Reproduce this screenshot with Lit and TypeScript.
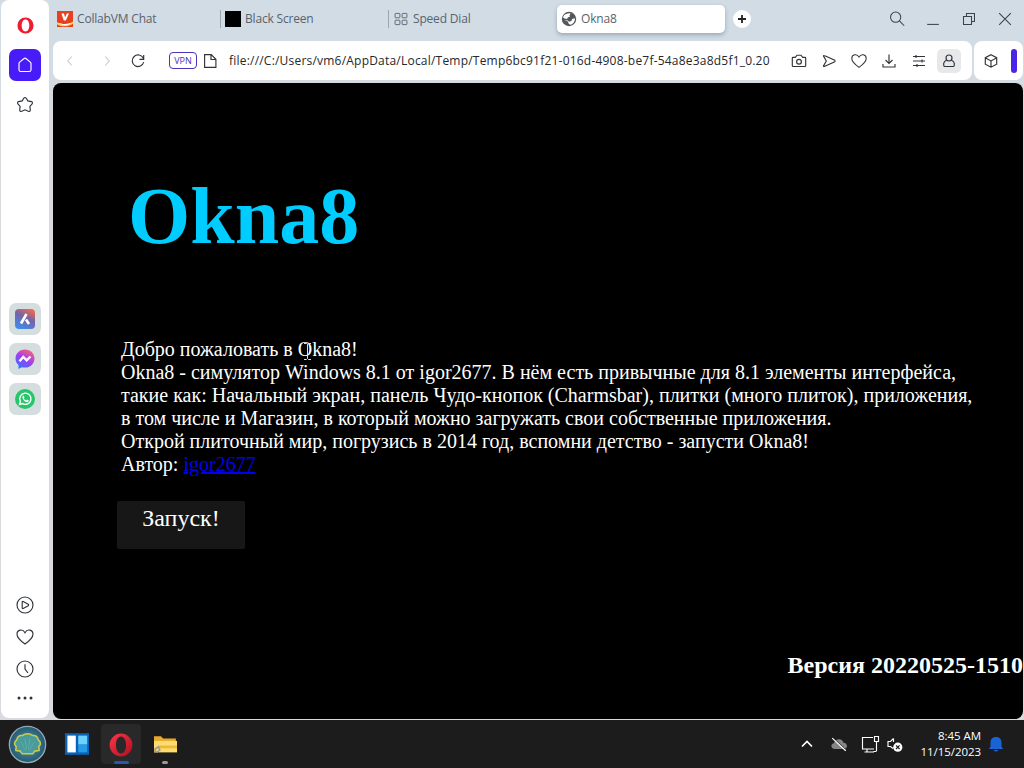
import { LitElement, html, css, svg } from 'lit';
import { customElement, property } from 'lit/decorators.js';
import { classMap } from 'lit/directives/class-map.js';

// line icons, all on a 20x20 grid
const icons: Record<string, unknown> = {
  home: svg`<path d="M4 8.500q0-.8.700-1.400l4.400-3.600q.9-.7 1.800 0l4.400 3.600q.7.600.7 1.400v6.200q0 1.800-1.800 1.800H5.800Q4 16.500 4 14.700z"/>`,
  star: svg`<path d="M8.700 3.300q1.300-1.600 2.600 0l1.500 2.600 3.600.7q1.700.8.7 2.300l-2.200 2.500.4 3.700q-.3 1.900-2 1.200L10 14.800l-3.300 1.500q-1.700.7-2-1.200l.4-3.700-2.200-2.500q-1-1.500.7-2.300l3.600-.7z"/>`,
  play: svg`<circle cx="10" cy="10" r="8"/><path d="M7.200 7v6q.2.800 1 .5l5-2.800q.9-.7 0-1.400l-5-2.800q-.8-.3-1 .5z"/>`,
  heart: svg`<path d="M10 17C5.500 13.800 2 10.800 2 7.200 2 2.500 7.800 1.500 10 5.700 12.200 1.500 18 2.500 18 7.200c0 3.600-3.500 6.600-8 9.800z"/>`,
  clock: svg`<circle cx="10" cy="10" r="8"/><path d="M10 5.200V10l3 4"/>`,
  dots: svg`<g fill="currentColor" stroke="none"><circle cx="4" cy="10" r="1.500"/><circle cx="10" cy="10" r="1.500"/><circle cx="16" cy="10" r="1.500"/></g>`,
  back: svg`<path d="M12 5 7.500 10l4.500 5"/>`,
  forward: svg`<path d="M8 5l4.500 5L8 15"/>`,
  reload: svg`<path d="M15.300 7.300A5.800 5.800 0 1 0 15.700 11M15.700 4v4.300h-4.200"/>`,
  file: svg`<path d="M4.600 3.600h6.600l4.700 4.700v8.100H4.600zM11 3.800v4.700h4.700"/>`,
  camera: svg`<path d="M4 6.300h2.300L8 4.200h4l1.700 2.100H16q.7 0 .7.700v7.800q0 .7-.7.700H4q-.7 0-.7-.7V7q0-.7.700-.7z"/><circle cx="10" cy="10.700" r="2.400"/>`,
  send: svg`<path d="M4.500 5q0-.8.800-.4l10.500 4.700q.7.700 0 1.400L5.300 15.400q-.8.400-.8-.4L7.300 10z"/>`,
  download: svg`<path d="M10 3.500V12M6.500 9l3.500 3.500L13.500 9M4 13v3h12v-3"/>`,
  sliders: svg`<path d="M4 5.500h12M4 10h12M4 14.500h12M7 4v3M13 8.500v3M8 13v3"/>`,
  profile: svg`<circle cx="10" cy="7" r="3"/><path d="M7.600 9.300C5.200 10.300 4.300 12.500 4.800 14.700q.2.800 1 .8h8.400q.8 0 1-.8c.5-2.200-.4-4.400-2.800-5.400"/>`,
  cube: svg`<path d="M10 3.700l5.700 3v6.500l-5.700 3-5.700-3V6.700zM4.500 6.900l5.500 3 5.500-3M10 10v6"/>`,
  search: svg`<circle cx="8.500" cy="8" r="5.700"/><path d="M12.700 12.200l5.300 5.300"/>`,
  minimize: svg`<path d="M3.500 16h13"/>`,
  restore: svg`<path d="M3.900 7.200h8.900v8.900H3.900zM7.200 7V3.900h8.900v8.900H13"/>`,
  close: svg`<path d="M3.500 3.500l13 13M16.500 3.500l-13 13"/>`,
  grid: svg`<rect x="2.600" y="3" width="6" height="5.500" rx=".8"/><rect x="11.400" y="3" width="6" height="5.500" rx=".8"/><rect x="2.600" y="11.500" width="6" height="5.500" rx=".8"/><rect x="11.400" y="11.500" width="6" height="5.500" rx=".8"/>`,
  chevron: svg`<path d="M5 12.500 10 7.500l5 5" stroke-width="1.700"/>`,
  cloud: svg`<path d="M5.500 15.500C.5 15.500.3 9.800 4.500 9.300 5.500 3.500 13.500 3.200 15 8.500c4.800 0 5.300 7 .5 7z" fill="#858585" stroke="none"/><path d="M3.500 3.500l15 14" stroke="#1c1c1c" stroke-width="1.200"/><path d="M2.500 3.500l15 14" stroke-width="1.400"/>`,
  monitor: svg`<path d="M13 3.500H2.500v11.500H14M7 15.500v2.500M4.500 18H14M14.500 2.500h4v5h-4zM16.500 7.500V17M13.500 17.500h3"/>`,
  volume: svg`<path d="M8.500 4.500 5.500 7.500H3v5h2.500L8 14.500M8.500 4.500V8"/><circle cx="12.800" cy="13.200" r="4.600" fill="#fff" stroke="none"/><path d="M11 11.400l3.600 3.600M14.600 11.400 11 15" stroke="#1c1c1c"/>`,
};

@customElement('ui-icon')
export class UiIcon extends LitElement {
  static styles = css`
    :host {
      display: inline-flex;
      flex: none;
    }

    svg {
      fill: none;
      stroke: currentColor;
      stroke-width: 1.15;
    }
  `;

  @property({ type: String }) name = '';
  @property({ type: Number }) size = 20;

  render() {
    return html`<svg width=${this.size} height=${this.size} viewBox="0 0 20 20">${icons[this.name]}</svg>`;
  }
}

@customElement('brand-icon')
export class BrandIcon extends LitElement {
  static styles = css`
    :host {
      display: inline-flex;
      flex: none;
    }
  `;

  @property({ type: String }) name = '';
  @property({ type: Number }) size = 20;

  private art() {
    switch (this.name) {
      case 'opera':
        return svg`<path fill-rule="evenodd" fill="#ed1c2e" d="M10 1.500a8.500 8.500 0 1 0 0 17 8.500 8.500 0 0 0 0-17zm0 2.200c2.500 0 4 2.800 4 6.300s-1.500 6.300-4 6.300S6 13.500 6 10s1.500-6.300 4-6.300z"/>`;
      case 'opera-dark':
        return svg`<defs><linearGradient id="o" x2="1" y2="1"><stop stop-color="#ff3549"/><stop offset="1" stop-color="#b00f20"/></linearGradient></defs>
          <path fill-rule="evenodd" fill="url(#o)" d="M10 .5a9.500 9.500 0 1 0 0 19 9.500 9.500 0 0 0 0-19zm0 2.500c2.700 0 4.200 3 4.200 7s-1.500 7-4.200 7-4.200-3-4.200-7S7.300 3 10 3z"/>`;
      case 'collab':
        return svg`<path fill="#e6401f" d="M0 0h20v20H0z"/><path fill="#fff" d="M5.500 3h3.200l1.500 5 2-5H15l-4 9H8.500z"/><path fill="#ffd44c" d="M0 14c5 3.500 15 3.500 20-1v2.500c-4 4-15 5-20 1z"/><path fill="#fff" d="M1 14.500c6 2.700 13 2.200 18 0-5 4.300-13 4.500-18 0z"/>`;
      case 'black':
        return svg`<path d="M0 0h20v20H0z"/>`;
      case 'globe':
        return svg`<circle cx="10" cy="10" r="9" fill="#54575a"/><path fill="#fff" d="M8.500 3q3-.8 3.500.5l-1.500 2 1 1.500-3 1-1 2-3-.5-2-1.500C3 5.500 5.300 3.400 8.500 3zM4 11.500l4.500.5 1.500 1.500 3-1 .8-2.500 3.500-1c.4 4-2 7.500-6 8.200l-1.800-1.700-1-2.500z"/><path fill="#54575a" d="M9 9l3-2.500 2 2-1.500 3L9 11z"/>`;
      case 'aria':
        return svg`<defs><linearGradient id="a" x1=".7" x2=".2" y2="1"><stop stop-color="#ec694f"/><stop offset=".4" stop-color="#7464a6"/><stop offset="1" stop-color="#3c8df2"/></linearGradient></defs>
          <rect width="20" height="20" rx="4" fill="url(#a)"/><path fill="none" stroke="#fff" stroke-width="2.600" d="M11.500 5 6 14.500M11 10.500l3 4.500"/>`;
      case 'messenger':
        return svg`<defs><linearGradient id="m" x1=".8" x2=".2" y2="1"><stop stop-color="#ff6570"/><stop offset=".5" stop-color="#a13df2"/><stop offset="1" stop-color="#2879ff"/></linearGradient></defs>
          <path fill="url(#m)" d="M10 .5C4.500.5.500 4.500.500 9.500c0 3 1.200 5 3 6.600V20l3.200-1.800q1.500.4 3.300.4c5.500 0 9.500-4 9.500-9.100S15.500.5 10 .5z"/><path fill="none" stroke="#fff" stroke-width="2.400" d="M4.500 12.300 8.300 8l3.400 3.300L15.500 7.500"/>`;
      case 'whatsapp':
        return svg`<circle cx="10" cy="10" r="10" fill="#25c76a"/><path fill="none" stroke="#fff" stroke-width="1.400" d="M4.500 15.500l.9-3.200a5.600 5.600 0 1 1 2.200 2.300z"/><path fill="#fff" d="M7.500 7l1.200-.2.800 1.800-.7.900q.9 1.500 2.300 2l.9-.9 1.800 1-.4 1.200c-2 1.600-6.700-2-5.900-5.800z"/>`;
      case 'shell':
        return svg`<defs><radialGradient id="s"><stop stop-color="#4f9ea6"/><stop offset="1" stop-color="#255872"/></radialGradient></defs>
          <circle cx="10" cy="10" r="9.300" fill="url(#s)" stroke="#8fa9b6" stroke-width=".7"/><path fill="#4a9b9c" stroke="#cfc94e" stroke-width=".8" stroke-linejoin="round" d="M7.200 14.700l-.9-1.300-2.300-.3.200-2C2.900 10 3.300 8.500 4.400 7.800 4.800 6.200 6 5.200 7.300 5.400c1.500-1.200 4-1.200 5.400 0 1.400-.2 2.500.8 2.900 2.400 1.100.7 1.500 2.200.2 3.300l.2 2-2.300.3-.9 1.300z"/><path fill="none" stroke="#5fb3a9" stroke-width=".4" d="M9 13 6.500 8.500M9.600 12.500l-.9-5.500M10.400 12.500l.9-5.500M11 13l2.500-4.500"/>`;
      case 'widgets':
        return svg`<path fill="#0962b7" d="M0 1h20v18H0z"/><path fill="#fff" d="M2 3h7v14H2z"/><path fill="#6cd1fc" d="M11 3h7.500v7.500H11z"/><path fill="#269be8" d="M11 10.500h7.500V17H11z"/>`;
      case 'folder':
        return svg`<path fill="#e9a92b" d="M0 2h6l2 2h11v4H0z"/><path fill="#ffdc72" d="M0 6h20v10H0z"/><path fill="#efb936" d="M5 10h15v2.500H5z"/><path fill="none" stroke="#a19b88" stroke-width="1.500" d="M1 16v-3l3-2 1 3-3 2"/>`;
      case 'bell':
        return svg`<path fill="#1b63d3" d="M10 3c-4 0-5.500 2.500-5.500 6v3.500L3 15h14l-1.500-2.500V9c0-3.500-1.500-6-5.500-6zM7.500 16h5q-2.500 3-5 0z"/>`;
      default:
        return '';
    }
  }

  render() {
    return html`<svg width=${this.size} height=${this.size} viewBox="0 0 20 20">${this.art()}</svg>`;
  }
}

@customElement('app-root')
export class AppRoot extends LitElement {
  static styles = css`
    :host {
      display: flex;
      flex-direction: column;
      width: 1024px;
      height: 768px;
      overflow: hidden;
      font-family: 'Open Sans', 'Noto Sans', sans-serif;
      font-size: 12px;
      color: #30343a;
    }

    * {
      box-sizing: border-box;
    }

    .browser {
      display: flex;
      height: 720px;
      padding: 0 1px 1px;
      gap: 4px;
      background: linear-gradient(#d1dce5 0, #d1dce5 60px, #d8dadd 110px, #d9dadf);
    }

    .sidebar {
      display: flex;
      flex-direction: column;
      align-items: center;
      width: 48px;
      height: 718px;
      padding: 9px 0 7px;
      background: #fff;
      border-radius: 8px;
    }

    .side-item {
      display: flex;
      align-items: center;
      justify-content: center;
      width: 32px;
      height: 32px;
      border-radius: 7px;
    }

    .side-top,
    .side-apps {
      display: flex;
      flex-direction: column;
      gap: 8px;
    }

    .side-apps {
      margin-top: 182px;
    }

    .side-apps .side-item {
      background: #d6dddf;
    }

    .side-item.active {
      background: #481cf8;
      color: #fff;
    }

    .side-bottom {
      display: flex;
      flex-direction: column;
      margin-top: auto;
    }

    .side-bottom .side-item:last-child {
      height: 26px;
    }

    .main {
      display: flex;
      flex-direction: column;
      width: 970px;
    }

    .tabs {
      display: flex;
      height: 41px;
      padding-top: 5px;
    }

    .tab {
      display: flex;
      align-items: center;
      gap: 4px;
      width: 168px;
      height: 28px;
      padding-left: 4px;
      color: #59636d;
      letter-spacing: -0.18px;
      white-space: nowrap;
    }

    .tab span {
      margin-top: -1px;
    }

    .tab.divided {
      background: linear-gradient(#9da6ae, #9da6ae) 0 5px / 1px 18px no-repeat;
      margin-left: -1px;
      width: 169px;
      padding-left: 5px;
    }

    .tab.active {
      background: #fff;
      border-radius: 5px;
      box-shadow: 0 2px 4px rgba(70, 90, 110, 0.4);
    }

    .new-tab {
      display: flex;
      align-items: center;
      justify-content: center;
      width: 18px;
      height: 18px;
      margin: 5px 0 0 8px;
      border-radius: 50%;
      background: #fff;
    }

    .window-buttons {
      display: flex;
      align-items: center;
      gap: 18px;
      height: 28px;
      margin-left: auto;
      padding-right: 9px;
      color: #3a434d;
    }

    .bars {
      display: flex;
      gap: 2px;
      height: 39px;
    }

    .address {
      display: flex;
      align-items: center;
      width: 919px;
      padding: 0 11px 0 8px;
      background: #fff;
      border-radius: 8px;
    }

    .nav {
      display: flex;
      align-items: center;
    }

    .disabled {
      color: #c5c7ca;
    }

    .nav ui-icon:nth-child(2) {
      margin-left: 19px;
    }

    .nav ui-icon:nth-child(3) {
      margin-left: 12px;
    }

    .vpn {
      width: 28px;
      height: 17px;
      margin-left: 21px;
      border: 1px solid #4c32bd;
      border-radius: 4px;
      color: #4c32bd;
      font-size: 9px;
      font-weight: 500;
      line-height: 16px;
      text-align: center;
    }

    .file {
      margin-left: 3px;
    }

    .url {
      width: 541px;
      margin-left: 9px;
      font-size: 12px;
      letter-spacing: 0.21px;
      color: #25282c;
      white-space: nowrap;
    }

    .actions {
      display: flex;
      align-items: center;
      gap: 6px;
      margin-left: auto;
    }

    .action {
      display: flex;
      align-items: center;
      justify-content: center;
      width: 24px;
      height: 24px;
      border-radius: 5px;
    }

    .action.boxed {
      background: #e7e8ea;
    }

    .extras {
      display: flex;
      align-items: center;
      width: 49px;
      padding: 0 6px 0 7px;
      justify-content: space-between;
      background: #fff;
      border-radius: 8px;
    }

    .marker {
      width: 6px;
      height: 24px;
      border-radius: 3px;
      background: #4a25e6;
    }

    .page {
      position: relative;
      height: 636px;
      margin-top: 3px;
      padding: 87px 0 0 64px;
      overflow: hidden;
      border-radius: 8px;
      background: #000;
      color: #fff;
      font-family: 'Liberation Serif', serif;
      font-size: 20px;
    }

    h1 {
      height: 92px;
      margin: 0 0 76px 11px;
      color: #0cf;
      font-size: 80px;
      line-height: 92px;
    }

    .intro {
      padding-left: 4px;
      line-height: 23px;
      white-space: nowrap;
    }

    .intro a {
      color: #0000ee;
    }

    .launch {
      display: block;
      width: 128px;
      height: 48px;
      margin-top: 25px;
      padding: 0 0 14px;
      border: 0;
      border-radius: 2px;
      background: #171717;
      color: #fff;
      font: 24px 'Liberation Serif', serif;
    }

    .version {
      margin: 102px 0 0;
      font-size: 24px;
      font-weight: bold;
      line-height: 28px;
      text-align: right;
    }

    .pointer {
      position: absolute;
      left: 250px;
      top: 260px;
    }

    .taskbar {
      display: flex;
      align-items: center;
      height: 48px;
      padding: 0 18px 0 7px;
      background: #1c1c1c;
      color: #fff;
    }

    .task {
      display: flex;
      align-items: center;
      justify-content: center;
      width: 40px;
      height: 40px;
      border-radius: 4px;
    }

    .task.widgets {
      margin-left: 10px;
    }

    .task.open {
      flex-direction: column;
      justify-content: flex-end;
      gap: 4px;
      margin-left: 4px;
    }

    .task.open::after {
      content: '';
      width: 6px;
      height: 3px;
      border-radius: 2px;
      background: #999;
    }

    .task.current {
      background: #292929;
    }

    .task.current::after {
      width: 15px;
      background: #2859a8;
    }

    .tray {
      display: flex;
      align-items: center;
      margin-left: auto;
    }

    .tray .cloud {
      margin-left: 13px;
    }

    .tray .monitor {
      margin-left: 12px;
    }

    .tray .volume {
      margin-left: 5px;
    }

    .time {
      width: 70px;
      margin: 0 5px 0 6px;
      font-size: 11.5px;
      line-height: 16px;
      text-align: right;
      white-space: nowrap;
      letter-spacing: -0.05px;
    }
  `;

  private tabs = [
    { icon: 'collab', title: 'CollabVM Chat' },
    { icon: 'black', title: 'Black Screen' },
    { icon: 'grid', title: 'Speed Dial' },
    { icon: 'globe', title: 'Okna8' },
  ];

  private renderTab(tab: { icon: string; title: string }, index: number) {
    const classes = { tab: true, divided: index === 1 || index === 2, active: index === 3 };
    return html`
      <div class=${classMap(classes)}>
        ${tab.icon === 'grid'
          ? html`<ui-icon name="grid" size="16"></ui-icon>`
          : html`<brand-icon name=${tab.icon} size="16"></brand-icon>`}
        <span>${tab.title}</span>
      </div>
    `;
  }

  private renderSidebar() {
    return html`
      <aside class="sidebar">
        <div class="side-top">
          <div class="side-item"><brand-icon name="opera" size="19"></brand-icon></div>
          <div class="side-item active"><ui-icon name="home"></ui-icon></div>
          <div class="side-item"><ui-icon name="star"></ui-icon></div>
        </div>
        <div class="side-apps">
          ${['aria', 'messenger', 'whatsapp'].map(
            (name) => html`<div class="side-item"><brand-icon name=${name}></brand-icon></div>`
          )}
        </div>
        <div class="side-bottom">
          ${['play', 'heart', 'clock', 'dots'].map(
            (name) => html`<div class="side-item"><ui-icon name=${name}></ui-icon></div>`
          )}
        </div>
      </aside>
    `;
  }

  private renderPage() {
    return html`
      <main class="page">
        <h1>Okna8</h1>
        <div class="intro">
          Добро пожаловать в Okna8!<br />
          Okna8 - симулятор Windows 8.1 от igor2677. В нём есть привычные для 8.1 элементы интерфейса,<br />
          такие как: Начальный экран, панель Чудо-кнопок (Charmsbar), плитки (много плиток), приложения,<br />
          в том числе и Магазин, в который можно загружать свои собственные приложения.<br />
          Открой плиточный мир, погрузись в 2014 год, вспомни детство - запусти Okna8!<br />
          Автор: <a href="#">igor2677</a>
        </div>
        <button class="launch">Запуск!</button>
        <p class="version">Версия 20220525-1510</p>
        <svg class="pointer" width="9" height="17" viewBox="0 0 9 17" fill="none" stroke="#ddd">
          <path d="M1 .5h2.500l1 1 1-1H8M4.500 1.500v14M1 16.500h2.500l1-1 1 1H8" />
        </svg>
      </main>
    `;
  }

  render() {
    return html`
      <div class="browser">
        ${this.renderSidebar()}
        <div class="main">
          <div class="tabs">
            ${this.tabs.map((tab, index) => this.renderTab(tab, index))}
            <div class="new-tab">
              <svg width="10" height="10" viewBox="0 0 10 10"><path d="M5 1v8M1 5h8" stroke="#222" stroke-width="1.800" /></svg>
            </div>
            <div class="window-buttons">
              ${['search', 'minimize', 'restore', 'close'].map((name) => html`<ui-icon name=${name} size="18"></ui-icon>`)}
            </div>
          </div>
          <div class="bars">
            <div class="address">
              <div class="nav">
                <ui-icon class="disabled" name="back" size="18"></ui-icon>
                <ui-icon class="disabled" name="forward" size="18"></ui-icon>
                <ui-icon name="reload"></ui-icon>
              </div>
              <div class="vpn">VPN</div>
              <ui-icon class="file" name="file"></ui-icon>
              <div class="url">file:///C:/Users/vm6/AppData/Local/Temp/Temp6bc91f21-016d-4908-be7f-54a8e3a8d5f1_0.20</div>
              <div class="actions">
                ${['camera', 'send', 'heart', 'download', 'sliders', 'profile'].map(
                  (name) => html`
                    <div class=${classMap({ action: true, boxed: name === 'profile' })}>
                      <ui-icon name=${name} size=${name === 'heart' ? 18 : 20}></ui-icon>
                    </div>
                  `
                )}
              </div>
            </div>
            <div class="extras">
              <ui-icon name="cube"></ui-icon>
              <div class="marker"></div>
            </div>
          </div>
          ${this.renderPage()}
        </div>
      </div>
      <footer class="taskbar">
        <div class="task"><brand-icon name="shell" size="39"></brand-icon></div>
        <div class="task widgets"><brand-icon name="widgets" size="24"></brand-icon></div>
        <div class="task open current"><brand-icon name="opera-dark" size="24"></brand-icon></div>
        <div class="task open"><brand-icon name="folder" size="23"></brand-icon></div>
        <div class="tray">
          <ui-icon name="chevron"></ui-icon>
          <ui-icon class="cloud" name="cloud" size="18"></ui-icon>
          <ui-icon class="monitor" name="monitor"></ui-icon>
          <ui-icon class="volume" name="volume"></ui-icon>
          <div class="time">8:45 AM<br />11/15/2023</div>
          <brand-icon name="bell" size="20"></brand-icon>
        </div>
      </footer>
    `;
  }
}
